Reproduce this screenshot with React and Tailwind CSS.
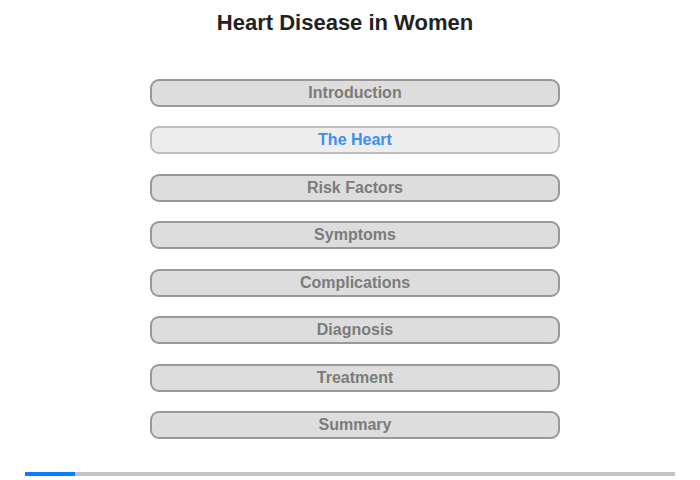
import React from "react";

const items = ["Introduction", "The Heart", "Risk Factors", "Symptoms", "Complications", "Diagnosis", "Treatment", "Summary"];

export default function App() {
  return (
    <div className="w-[700px] h-[480px] bg-white relative" style={{ fontFamily: '"Liberation Sans", Arial, sans-serif' }}>
      <div className="pt-[10px] h-[79px] text-center">
        <h1 className="text-[22px] leading-[25px] font-bold text-[#222] pr-[10px]">Heart Disease in Women</h1>
      </div>
      <div className="flex flex-col items-center gap-[19.43px] pl-[10px]">
        {items.map((t, i) => {
          const active = i === 1;
          return (
            <div
              key={t}
              className={
                "w-[410px] h-[28px] rounded-[9px] border-2 flex items-center justify-center text-[16px] font-bold " +
                (active ? "bg-[#ededed] border-[#bdbdbd] text-[#3c8ef3]" : "bg-[#dddddd] border-[#999999] text-[#7b7b7b]")
              }
            >
              {t}
            </div>
          );
        })}
      </div>
      <div className="absolute left-[25px] top-[472px] w-[650px] h-[4px] bg-[#c3c3c3] flex">
        <div className="w-[50px] h-full bg-[#0a7cff]" />
      </div>
    </div>
  );
}
